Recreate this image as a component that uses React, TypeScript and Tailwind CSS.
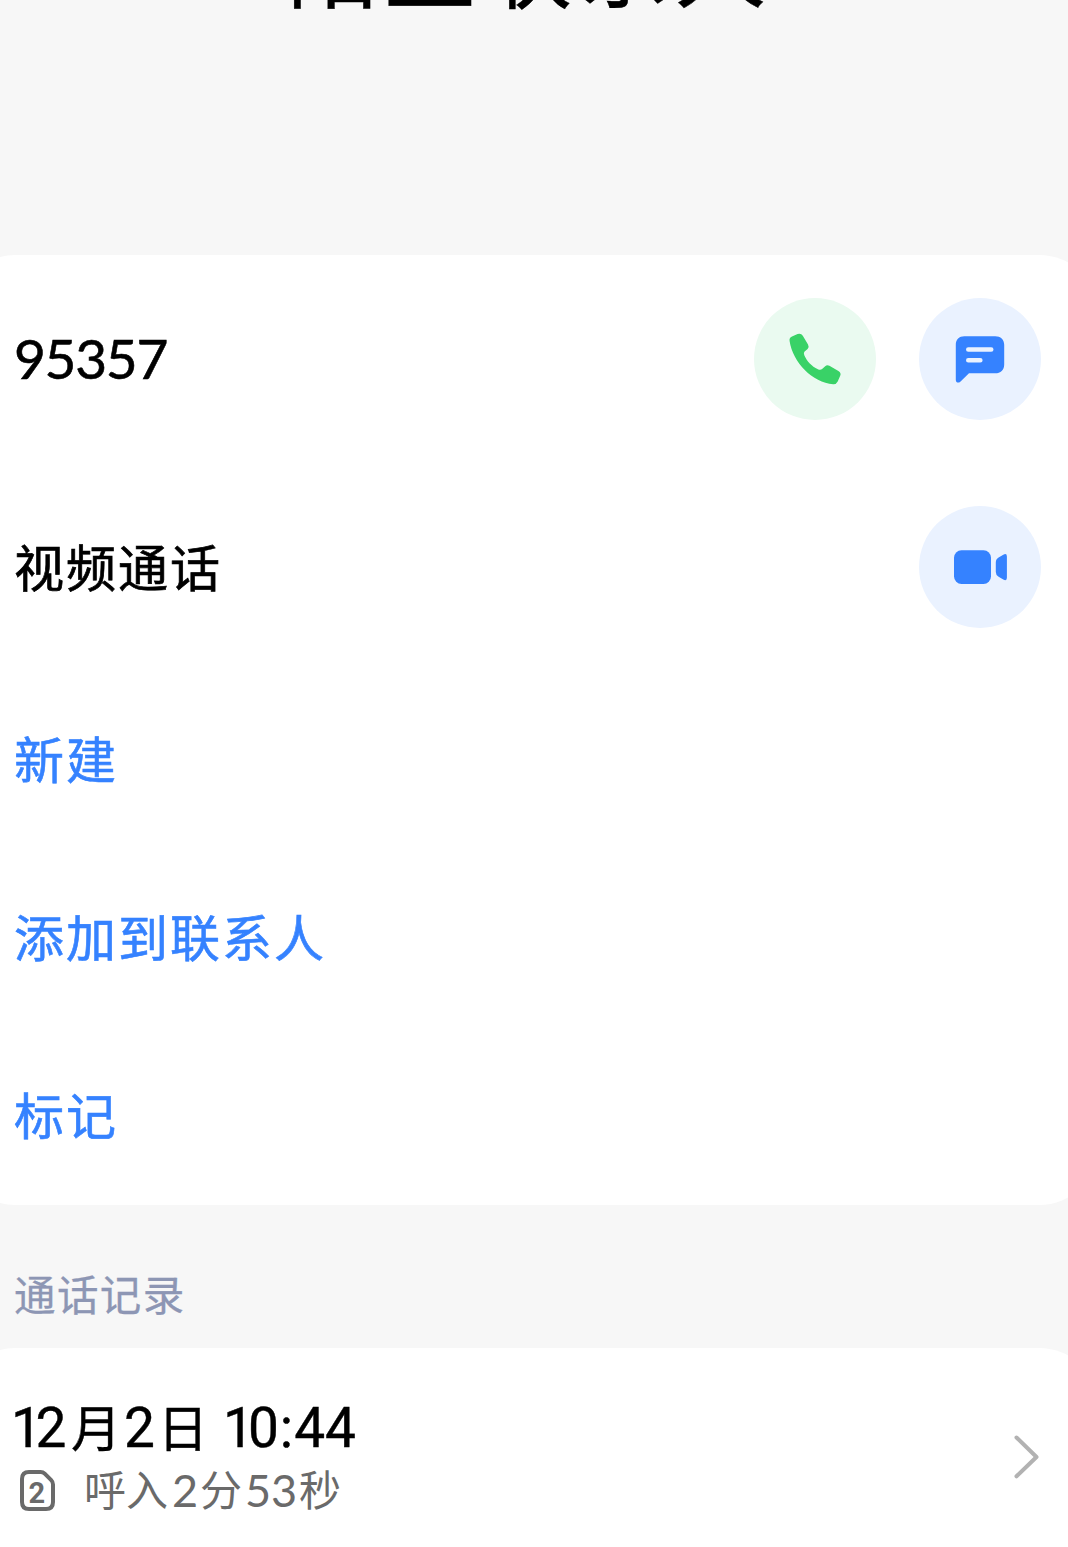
import type { ReactNode } from "react";

function CircleButton({ label, tone, children }: { label: string; tone: string; children: ReactNode }) {
  return (
    <button aria-label={label} className={`flex h-[122px] w-[122px] items-center justify-center rounded-full ${tone}`}>
      {children}
    </button>
  );
}

function PhoneIcon() {
  return (
    <svg width="122" height="122" viewBox="0 0 122 122" fill="#39d267">
      <path d="M38 38.4 43.6 36Q47 34.8 48.8 37.8L54 46.4Q55.5 49 53.6 50.9L50.6 53.6Q49.2 54.9 50.3 57.3C53.2 63.6 57.5 68.2 63.9 71.3Q66.5 72.5 68.1 71L71.2 68.2Q73.1 66.5 75.4 67.8L84.4 72.9Q87.5 74.8 86.2 77.8L83.7 83.6Q82.3 86.5 79.2 86.3C58.5 84.5 38.8 64.6 35.6 43Q35 39.7 38 38.4Z" />
    </svg>
  );
}

function MessageIcon() {
  return (
    <svg width="122" height="122" viewBox="0 0 122 122">
      <path fill="#3582ff" d="M45.4 38.2H76.2C81.6 38.2 85.2 41.5 85.2 46.7V66.4C85.2 71.8 81.6 75.2 76.2 75.2H50L41.3 83.7C39.4 85.4 36.8 84.6 36.8 82V46.7C36.8 41.5 40.2 38.2 45.4 38.2Z" />
      <path stroke="#eaf2ff" strokeWidth="4.6" strokeLinecap="round" d="M49.3 51.5H72.2M49.3 62.3H61.3" />
    </svg>
  );
}

function VideoIcon() {
  return (
    <svg width="122" height="122" viewBox="0 0 122 122" fill="#3582ff">
      <rect x="35" y="44.2" width="37" height="33.8" rx="7.5" />
      <path d="M76.8 56.5Q76.8 53 79.6 51.4L84.3 48.7Q87.9 46.9 87.9 50.5V71.8Q87.9 75.4 84.3 73.5L79.6 70.8Q76.8 69.2 76.8 66Z" />
    </svg>
  );
}

function SimIcon() {
  return (
    <svg width="38" height="44" viewBox="0 0 38 44" fill="none" stroke="#6a6a6a" strokeWidth="4">
      <path d="M11 4H22.5Q25 4 26.7 5.7L33.2 12.2Q35 14 35 16.5V34Q35 41 28 41H11Q4 41 4 34V11Q4 4 11 4Z" strokeLinejoin="round" />
      <text x="18.8" y="35" textAnchor="middle" fill="#6a6a6a" stroke="none" fontSize="29" className="font-['Roboto',sans-serif] font-bold">2</text>
    </svg>
  );
}

const links = ["新建", "添加到联系人", "标记"];

export default function App() {
  return (
    <main className="flex h-[1547px] w-full flex-col overflow-hidden bg-[#f7f7f7] font-['Noto_Sans_CJK_SC',sans-serif] text-black">
      <header className="flex h-[255px] shrink-0 items-start justify-center overflow-hidden">
        <h1 className="-mt-[89px] pr-[10px] text-[92px] leading-[100px] tracking-[4.8px] whitespace-nowrap [-webkit-text-stroke:0.4px]">陌生联系人</h1>
      </header>

      <section className="-mr-[31px] -ml-[45px] h-[950px] shrink-0 rounded-[60px] bg-white pr-[58px] pl-[59px]">
        <div className="flex h-[208px] items-center justify-between">
          <span className="pb-[2px] font-['Lato',sans-serif] text-[55px] leading-[60px] tracking-[-1.3px] [-webkit-text-stroke:0.6px]">95357</span>
          <div className="flex gap-[43px]">
            <CircleButton label="拨打" tone="bg-[#eafaf0]"><PhoneIcon /></CircleButton>
            <CircleButton label="短信" tone="bg-[#eaf2ff]"><MessageIcon /></CircleButton>
          </div>
        </div>
        <div className="flex h-[208px] items-center justify-between">
          <span className="pb-[5px] text-[50px] leading-[60px] tracking-[2px] [-webkit-text-stroke:0.7px]">视频通话</span>
          <CircleButton label="视频通话" tone="bg-[#eaf2ff]"><VideoIcon /></CircleButton>
        </div>
        {links.map((text) => (
          <div key={text} className="flex h-[178px] items-center pb-[6px] text-[50px] leading-[60px] tracking-[2px] text-[#3582ff] [-webkit-text-stroke:0.6px]">{text}</div>
        ))}
      </section>

      <h2 className="flex h-[143px] shrink-0 items-center pt-[32px] pl-[14px] text-[41.5px] leading-[50px] tracking-[1.4px] text-[#8d96b4] [-webkit-text-stroke:0.3px]">通话记录</h2>

      <section className="-mr-[31px] -ml-[45px] flex h-[260px] shrink-0 items-start justify-between rounded-t-[60px] bg-white pr-[58px] pl-[59px]">
        <div className="flex flex-col pt-[48px]">
          <div className="flex h-[64px] items-center text-[50px] leading-[64px] whitespace-nowrap [-webkit-text-stroke:0.4px]">
            <span className="-ml-[3px] w-[60px] font-['Roboto',sans-serif] text-[55px] tracking-[-6.5px]">12</span>
            <span className="w-[53px] pb-[6px]">月</span>
            <span className="w-[34px] font-['Roboto',sans-serif] text-[55px]">2</span>
            <span className="w-[65px] pb-[6px]">日</span>
            <span className="font-['Roboto',sans-serif] text-[55px]"><span className="tracking-[-6px]">1</span><span className="tracking-[1px]">0:</span>44</span>
          </div>
          <div className="flex h-[60px] items-center text-[42px] leading-[60px] whitespace-nowrap text-[#6a6a6a]">
            <span className="mr-[14px] ml-1"><SimIcon /></span>
            <span className="w-[87px] pb-[4px] pl-[14px]">呼入</span>
            <span className="ml-[15px] w-[28px] font-['Lato',sans-serif] text-[45px]">2</span>
            <span className="w-[45px] pb-[4px]">分</span>
            <span className="w-[54px] font-['Lato',sans-serif] text-[45px]">53</span>
            <span className="pb-[4px]">秒</span>
          </div>
        </div>
        <svg width="30" height="48" viewBox="0 0 30 48" className="mt-[85px]" fill="none" stroke="#b2b2b2" strokeWidth="4" strokeLinecap="round" strokeLinejoin="round">
          <path d="M5.5 4.5 25.5 24 5.5 43.3" />
        </svg>
      </section>
    </main>
  );
}
